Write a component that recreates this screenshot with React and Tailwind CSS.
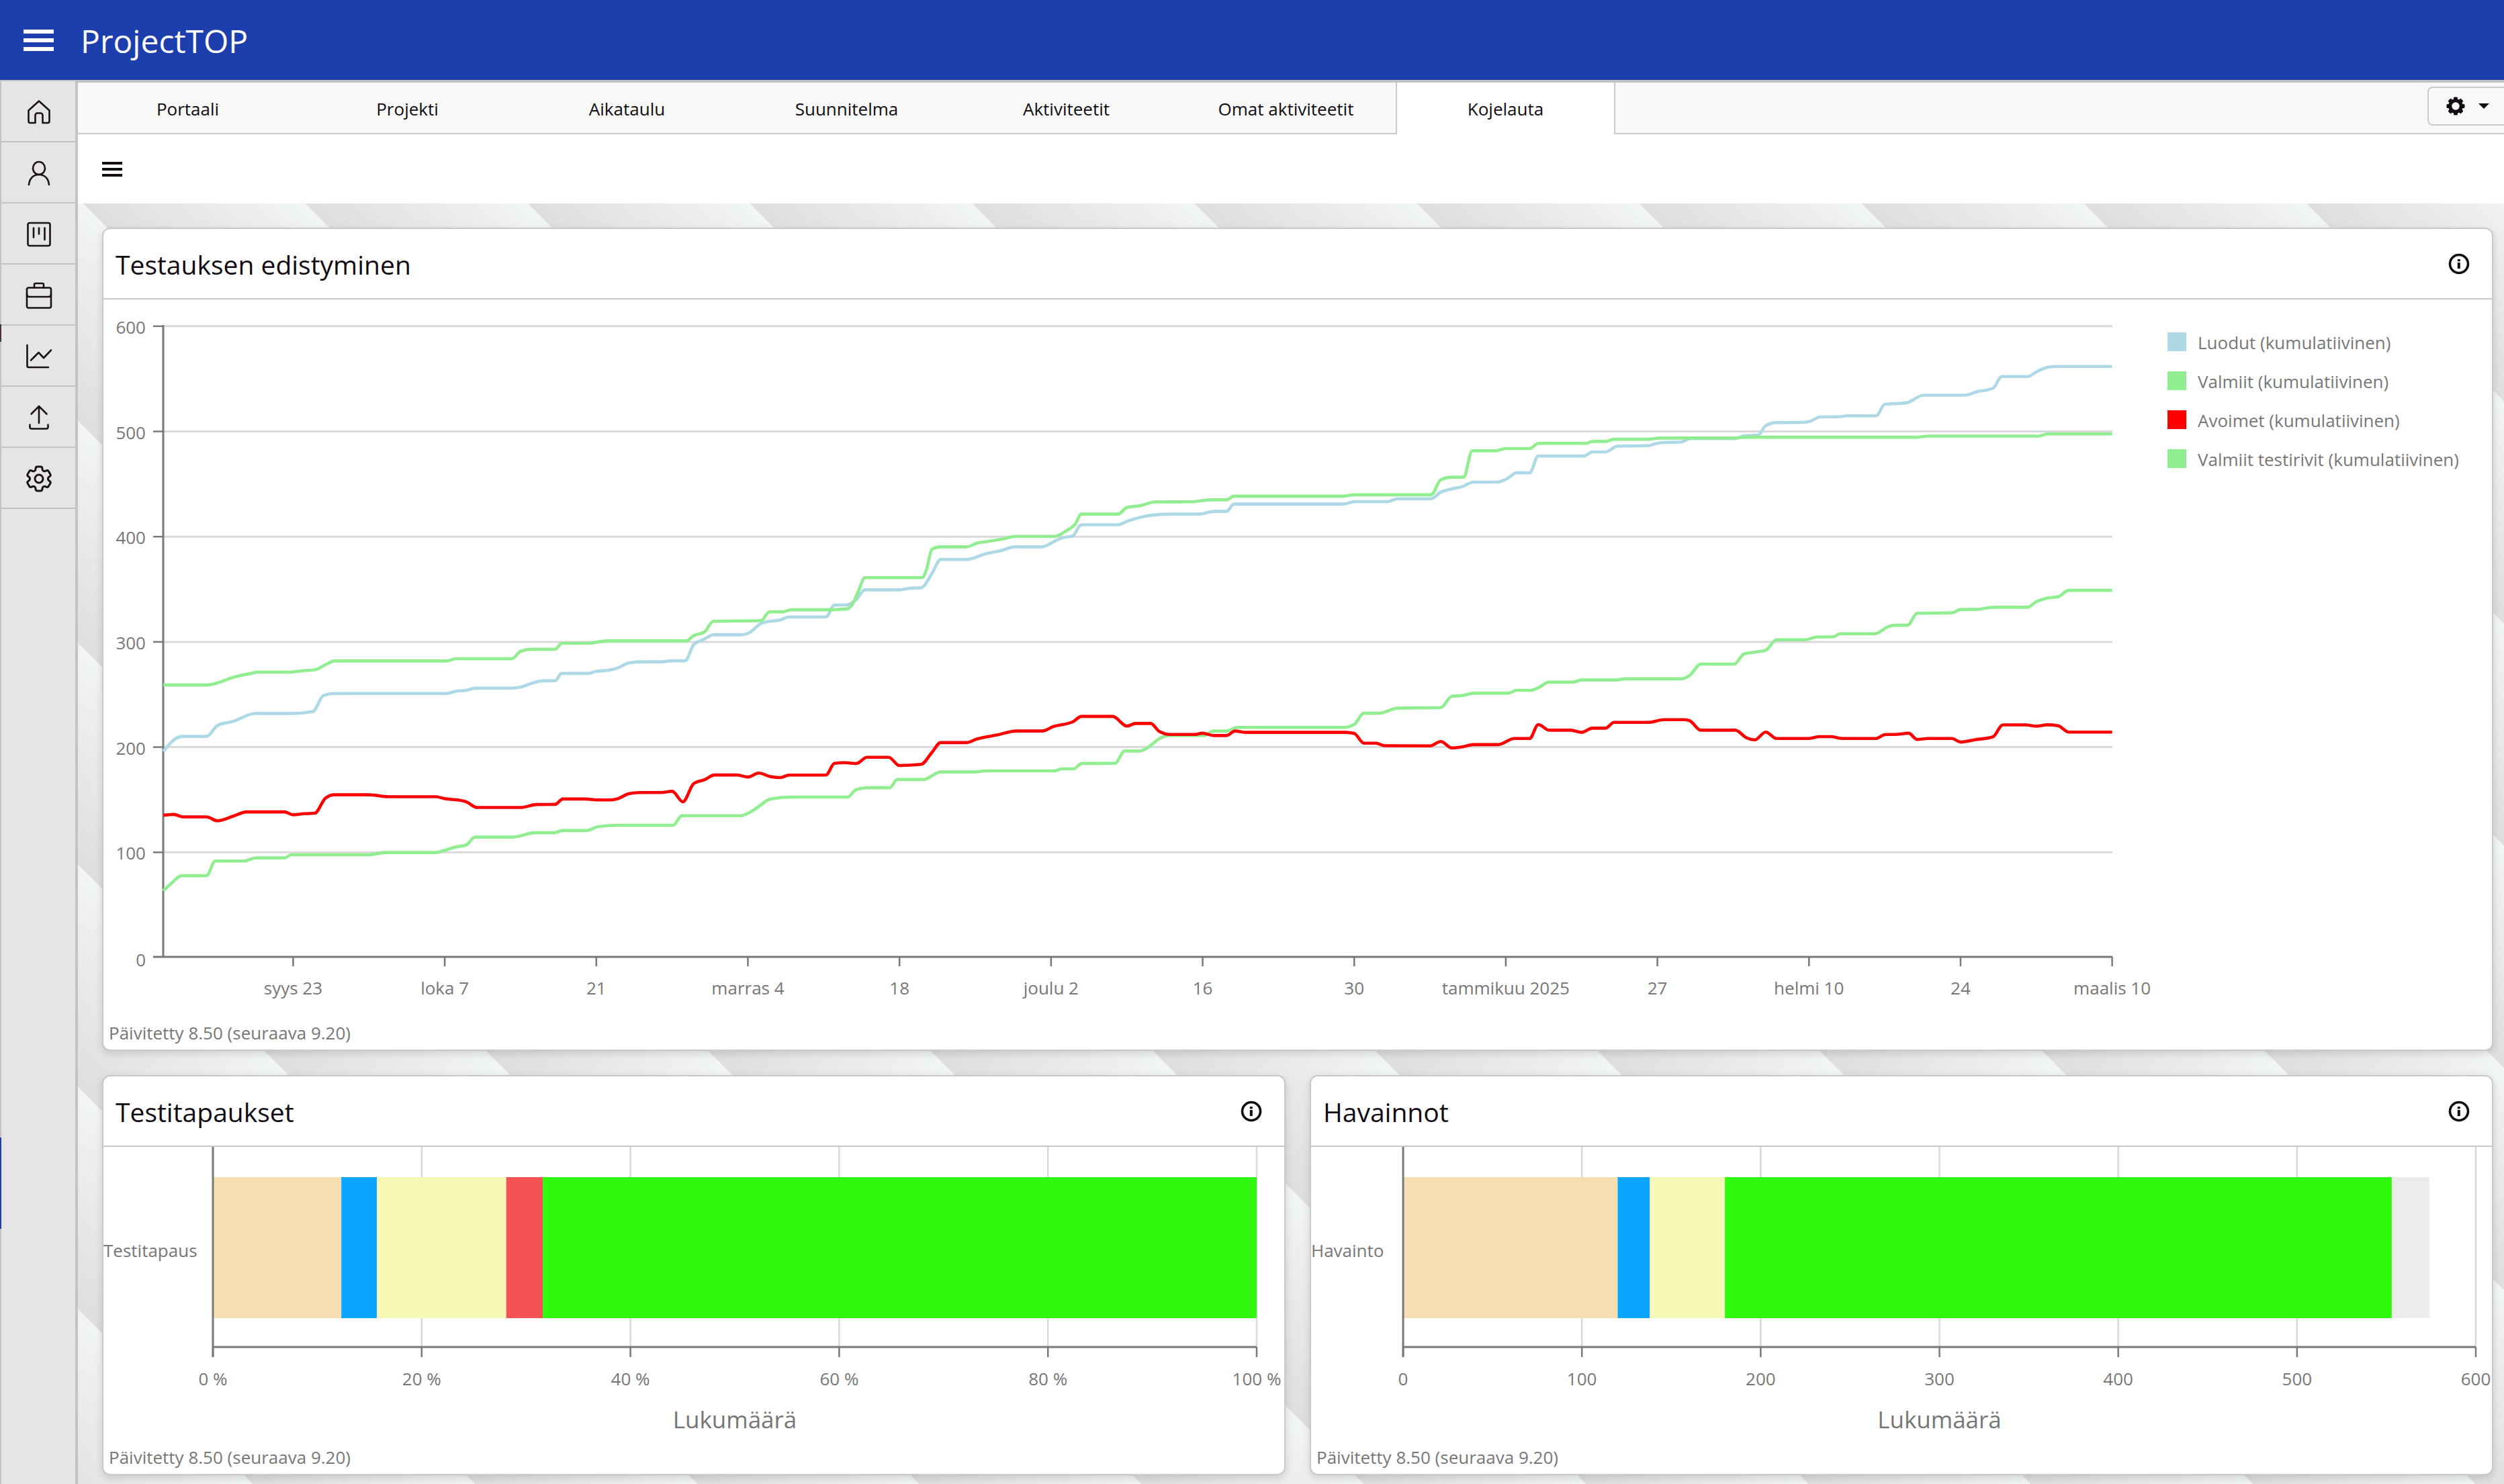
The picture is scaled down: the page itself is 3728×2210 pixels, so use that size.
import React from "react";
import { HiOutlineCog6Tooth } from "react-icons/hi2";

const tabs = [
  "Portaali",
  "Projekti",
  "Aikataulu",
  "Suunnitelma",
  "Aktiviteetit",
  "Omat aktiviteetit",
  "Kojelauta",
];

// Each point is [day, value]
const valmiit = [
  [0, 259], [4, 259], [5, 261], [6.5, 266.4], [8, 269.8], [8.8, 271.2], [11.5, 271.2],
  [13, 272.7], [14, 273.5], [15, 278.4], [15.8, 281.8], [26.2, 281.8], [27, 284], [32.2, 284],
  [33, 291], [34, 293], [36.2, 293], [36.8, 298.7], [39.2, 298.7], [41, 301], [48.3, 301],
  [49, 306], [50, 309.5], [50.8, 319.6], [55.2, 320.2], [56, 328.6], [57.2, 328.6], [58, 330.5],
  [61, 330.5], [63.1, 331.3], [63.6, 335], [64.2, 348], [64.8, 361], [70.1, 361], [70.5, 369],
  [71, 388], [71.8, 390.3], [74.2, 390.3], [75.2, 394], [76, 395.2], [77.5, 397.7], [78.8, 400.3],
  [82.3, 400.3], [83.5, 406.2], [84.2, 411.5], [84.8, 421.4], [88.2, 421.4], [89, 427.7],
  [90.2, 429.4], [91.6, 433], [95, 433.2], [96.8, 435], [98.2, 435], [98.9, 438.5],
  [109, 438.5], [110, 439.8], [117.1, 439.8], [118, 454.1], [119, 456.5], [120.1, 456.5],
  [120.9, 481.6], [123, 481.6], [124, 483.7], [126.2, 483.7], [127, 488.7], [131.4, 488.7],
  [132, 490.5], [133.2, 490.5], [134, 492.6], [137.2, 492.6], [138.2, 493.7], [145, 493.7],
  [146, 494.5], [162, 494.5], [163, 495.5], [173.2, 495.5], [174, 497.6], [180, 497.6],
];

const luodut = [
  [0, 196], [1, 207], [1.8, 210.2], [4, 210.2], [5, 220.4], [6.5, 224.6], [8.5, 232], [12, 232],
  [13.8, 233.7], [14.8, 249], [15.8, 251], [26.2, 251], [27, 253], [28, 254], [28.8, 256],
  [32, 256], [33, 257], [34.3, 261.5], [35, 263], [36.2, 263], [36.8, 270], [39.2, 270],
  [40, 272], [41.2, 273.2], [42, 275.3], [43, 280], [44, 281], [46, 281], [47, 282],
  [48.2, 282], [49, 297.4], [50, 302.7], [50.8, 306.7], [53.3, 306.7], [54, 308], [55.2, 317.4],
  [56, 319.5], [57, 320.8], [57.8, 323.7], [61.2, 323.7], [62, 335], [63, 335], [64, 340],
  [64.8, 349.5], [68, 349.5], [69, 351], [70, 351.4], [71, 365], [71.8, 378.3], [74.2, 378.3],
  [76, 383.8], [77.3, 386.5], [78.7, 390.3], [81.2, 390.3], [82.2, 395], [83, 398.8],
  [84, 400.7], [84.8, 411.3], [88.2, 411.3], [89, 414.6], [91, 420], [93, 421.4], [95.7, 421.4],
  [97, 424], [98.2, 424], [98.9, 431], [109, 431], [110, 433.3], [113.1, 433.3], [114, 436],
  [117.1, 436], [118, 442.3], [119, 445.4], [120, 447.6], [121, 451.8], [123.2, 451.8],
  [124.1, 455], [125, 460.7], [126.2, 460.7], [127, 476.6], [131.2, 476.6], [132, 480.5],
  [133.2, 480.5], [134.3, 486], [137.2, 486.6], [138.2, 489.2], [140.2, 490], [141, 493.2],
  [145.2, 493.2], [146, 495.8], [147.3, 496.4], [148, 505.5], [149, 508.4], [151.5, 508.6],
  [152.2, 510], [153, 513.7], [154.8, 514], [155.5, 514.8], [158.2, 514.8], [159, 525.8],
  [161, 527.2], [162.6, 534.5], [166.4, 534.5], [167.5, 537.7], [169, 541], [169.8, 552.2],
  [172.2, 552.2], [173.2, 557.7], [174.3, 561.4], [175, 561.7], [180, 561.7],
];

const avoimet = [
  [0, 135.2], [1, 136], [1.8, 133.7], [4, 133.7], [5, 130], [6.5, 134.5], [7.7, 138.4],
  [11.2, 138.4], [12, 135.7], [13, 136.7], [14, 137.2], [15, 151.7], [15.8, 154.7], [19, 154.7],
  [20.8, 152.8], [25.2, 152.8], [26, 151], [27.3, 149.6], [28, 148], [29, 142.6], [33, 142.6],
  [34.5, 145.4], [36.2, 145.6], [36.9, 150.7], [39, 150.7], [40, 149.8], [41.3, 149.8],
  [42, 151], [43, 155.7], [44, 156.8], [46, 156.8], [47, 158], [48, 148], [49, 165.4],
  [50, 169], [50.9, 173.5], [53, 173.5], [54, 171.6], [55, 175.3], [56, 172.2], [57, 171],
  [57.8, 173.4], [61.2, 173.4], [62, 184.6], [63, 185.2], [64, 184.4], [65, 190.3],
  [67, 190.3], [68, 182.5], [70, 183.6], [71, 195], [71.8, 204.3], [74.2, 204.3],
  [75.2, 207.9], [77, 211.5], [78.8, 215.3], [81.2, 215.3], [82.2, 219.5], [84, 224],
  [84.8, 229.2], [87.7, 229.2], [89, 220], [89.8, 222.5], [91.2, 222.5], [92, 214.9],
  [93, 212], [95.3, 212], [96, 213.2], [97, 211], [98.2, 211], [99, 215.3], [100, 214],
  [109.2, 214], [110, 213], [110.9, 203.7], [112, 203.7], [112.8, 201.3], [117, 201.2],
  [118, 205.3], [119, 199.2], [120, 200.3], [121, 202.4], [123.3, 202.4], [124.8, 208.2],
  [126.2, 208.2], [127, 221.4], [128, 216.1], [130, 216.1], [131, 214], [132, 218],
  [133.2, 218], [134, 223.5], [137.2, 223.5], [138.6, 226.1], [140.5, 226.1], [141, 225],
  [142, 216.1], [145.2, 216.1], [146.2, 209], [147, 206.9], [148, 214.3], [149, 208.2],
  [152, 208.2], [153, 210], [154, 210], [155, 208.2], [158.2, 208.2], [159, 211.9],
  [160.2, 212.2], [161.2, 213.2], [162, 207.2], [163, 208.2], [165.2, 208.2], [166, 204.8],
  [167.3, 206.9], [169, 209.8], [169.9, 221.1], [172, 221.1], [173, 219.8], [174, 221.2],
  [175, 220.3], [176, 214.3], [180, 214.3],
];

const testirivit = [
  [0, 63.4], [0.8, 71], [1.7, 77.8], [4, 77.8], [4.8, 91.7], [7.5, 91.7], [8.5, 94.7],
  [11.2, 94.7], [11.8, 97.6], [19, 97.6], [20.5, 99.8], [25.2, 99.8], [26, 102], [27, 105],
  [28, 107.2], [28.8, 114.5], [32.3, 114.5], [34.3, 118.6], [36.1, 118.6], [36.9, 120.7],
  [39.1, 120.7], [40.2, 124.4], [42, 125.7], [47.1, 125.7], [47.9, 134.8], [53.3, 134.8],
  [54.5, 140], [55.2, 145.1], [56, 150.4], [58, 152.5], [63.2, 152.5], [64, 159.6],
  [65, 161.4], [67.1, 161.4], [67.8, 169.2], [70.2, 169.2], [71.8, 176.4], [75, 176.4],
  [76, 177.4], [82.3, 177.4], [83, 179.3], [84.1, 179.3], [84.8, 184.4], [87.9, 184.6],
  [88.8, 196.3], [90.2, 196.3], [91, 200], [92, 208], [92.9, 211], [96.1, 211], [97, 215.3],
  [98.2, 215.3], [99.2, 218.7], [109, 218.7], [110, 221.6], [110.9, 232.2], [112.3, 232.2],
  [114, 237], [118, 237.6], [119, 248.3], [120, 249], [121, 251.2], [124.2, 251.2],
  [125, 254], [126.3, 254], [127, 256.4], [128, 261.7], [130.2, 261.7], [131, 263.8],
  [134.2, 263.8], [135, 264.9], [140.2, 264.9], [141, 268.3], [142, 278.9], [145.1, 278.9],
  [146, 288.6], [147, 290.2], [148, 292], [149, 302], [151.6, 302], [152.8, 304.7],
  [154.2, 304.7], [154.9, 307.8], [158.1, 307.8], [159.3, 314.4], [160, 315.8],
  [161.1, 315.8], [162, 327.2], [165.2, 327.6], [166, 330.8], [167.4, 330.8], [169, 332.9],
  [172.2, 332.9], [173, 338.2], [174, 341.6], [175, 342.8], [176, 349], [180, 349],
];

const series = [
  { name: "Luodut (kumulatiivinen)", color: "#add8e6", points: luodut },
  { name: "Valmiit (kumulatiivinen)", color: "#90ee90", points: valmiit },
  { name: "Avoimet (kumulatiivinen)", color: "#ff0000", points: avoimet },
  { name: "Valmiit testirivit (kumulatiivinen)", color: "#90ee90", points: testirivit },
];

const dateTicks = [
  "syys 23", "loka 7", "21", "marras 4", "18", "joulu 2", "16",
  "30", "tammikuu 2025", "27", "helmi 10", "24", "maalis 10",
];

const testCases = {
  title: "Testitapaukset",
  category: "Testitapaus",
  left: 163,
  right: 1717,
  max: 100,
  ticks: [0, 20, 40, 60, 80, 100],
  unit: " %",
  segments: [
    { from: 0, to: 12.3, color: "#f7deb1" },
    { from: 12.3, to: 15.7, color: "#0ba5ff" },
    { from: 15.7, to: 28.1, color: "#f6f8b6" },
    { from: 28.1, to: 31.6, color: "#f55353" },
    { from: 31.6, to: 100, color: "#30f90f" },
  ],
};

const findings = {
  title: "Havainnot",
  category: "Havainto",
  left: 137,
  right: 1734,
  max: 600,
  ticks: [0, 100, 200, 300, 400, 500, 600],
  unit: "",
  segments: [
    { from: 0, to: 120, color: "#f7deb1" },
    { from: 120, to: 138, color: "#0ba5ff" },
    { from: 138, to: 180, color: "#f6f8b6" },
    { from: 180, to: 553, color: "#30f90f" },
    { from: 553, to: 574, color: "#ececec" },
  ],
};

const dayX = (d) => 89 + d * 16.12;
const valueY = (v) => 980 - v * 1.567;

// Monotone cubic path, so flat stretches stay flat
const linePath = (points) => {
  const p = points.map(([d, v]) => [dayX(d), valueY(v)]);
  const slope = (i) => (p[i + 1][1] - p[i][1]) / (p[i + 1][0] - p[i][0]);
  const tangents = p.map((_, i) => {
    if (i === 0) return slope(0);
    if (i === p.length - 1) return slope(i - 1);
    const a = slope(i - 1);
    const b = slope(i);
    if (a * b <= 0) return 0;
    return Math.sign(a) * Math.min(Math.abs(a), Math.abs(b), Math.abs(a + b) / 4) * 2;
  });
  let path = `M${p[0][0]},${p[0][1]}`;
  for (let i = 0; i < p.length - 1; i++) {
    const h = (p[i + 1][0] - p[i][0]) / 3;
    path += `C${p[i][0] + h},${p[i][1] + h * tangents[i]} ${p[i + 1][0] - h},${
      p[i + 1][1] - h * tangents[i + 1]
    } ${p[i + 1][0]},${p[i + 1][1]}`;
  }
  return path;
};

const LineIcon = ({ children }) => (
  <svg
    viewBox="0 0 40 40"
    className="size-10"
    fill="none"
    stroke="#1a1015"
    strokeWidth="2.6"
    strokeLinecap="round"
    strokeLinejoin="round"
    aria-hidden="true"
  >
    {children}
  </svg>
);

const sideItems = [
  {
    label: "Koti",
    icon: (
      <LineIcon>
        <path d="M20 3.5 4.5 17.500V33.500a2.500 2.500 0 0 0 2.500 2.500h7.500V24.500a3 3 0 0 1 3-3h5a3 3 0 0 1 3 3V36H33a2.500 2.500 0 0 0 2.500-2.500V17.500z" />
      </LineIcon>
    ),
  },
  {
    label: "Käyttäjä",
    icon: (
      <LineIcon>
        <ellipse cx="20" cy="12.5" rx="9" ry="9.5" />
        <path d="M5 37c.8-9 6.500-15 15-15s14.200 6 15 15" />
      </LineIcon>
    ),
  },
  {
    label: "Taulu",
    icon: (
      <LineIcon>
        <rect x="3.5" y="3" width="33" height="34" rx="2.5" />
        <path d="M12 10.500v14M20 10.500v9M28.500 10.500v17.500" />
      </LineIcon>
    ),
  },
  {
    label: "Salkku",
    icon: (
      <LineIcon>
        <rect x="2" y="8.5" width="36" height="30" rx="2.5" />
        <path d="M13 8.500V4a2 2 0 0 1 2-2h10a2 2 0 0 1 2 2v4.500M2 18c0 3 1.500 4 4 4h28c2.500 0 4-1 4-4" />
      </LineIcon>
    ),
  },
  {
    label: "Raportit",
    icon: (
      <LineIcon>
        <path d="M2.500 3v31a2 2 0 0 0 2 2H34M8 25.500 19.500 14l7.500 8L38 10.500" />
      </LineIcon>
    ),
  },
  {
    label: "Lähetä",
    icon: (
      <LineIcon>
        <path d="M20 28V3M8.500 14.500 20 3l11.500 11.500M6.500 30.500V34a2.500 2.500 0 0 0 2.500 2.500h22a2.500 2.500 0 0 0 2.500-2.500v-3.500" />
      </LineIcon>
    ),
  },
  {
    label: "Asetukset",
    icon: <HiOutlineCog6Tooth className="size-12 text-[#1a1015]" aria-hidden="true" />,
  },
];

const InfoIcon = () => (
  <svg viewBox="0 0 32 32" className="size-8" aria-hidden="true">
    <circle cx="16" cy="16" r="13.5" fill="none" stroke="#120b14" strokeWidth="3.6" />
    <path d="M13.800 14h4v9h-4zM13.800 9h4v3.200h-4z" fill="#120b14" />
  </svg>
);

const GearIcon = () => (
  <svg viewBox="0 0 28 28" className="size-7" aria-hidden="true">
    <circle cx="14" cy="14" r="8.3" fill="none" stroke="#120b14" strokeWidth="5" />
    {[0, 45, 90, 135, 180, 225, 270, 315].map((a) => (
      <rect
        key={a}
        x="11"
        y="0.5"
        width="6"
        height="5"
        rx="1.5"
        fill="#120b14"
        transform={`rotate(${a} 14 14)`}
      />
    ))}
  </svg>
);

const Card = ({ title, children }) => (
  <section className="flex flex-col rounded-xl border-2 border-[#c9c9c9] bg-white shadow-[0_4px_12px_rgba(0,0,0,0.14)]">
    <div className="flex h-[105px] items-center justify-between border-b-2 border-[#c9c9c9] pr-[33px] pl-[18px]">
      <h2 className="pt-[2px] text-[39px] leading-[52px] text-[#120b14]">{title}</h2>
      <button type="button" aria-label={`Tietoja: ${title}`}>
        <InfoIcon />
      </button>
    </div>
    {children}
    <p className="h-[47px] pl-2 text-[26px] leading-[44px] text-[#777]">
      Päivitetty 8.50 (seuraava 9.20)
    </p>
  </section>
);

const ProgressChart = () => (
  <div className="flex items-start">
    <svg
      viewBox="0 0 3050 1070"
      className="min-w-0 flex-1 overflow-visible"
      role="img"
      aria-label="Testauksen edistyminen"
    >
      {[100, 200, 300, 400, 500, 600].map((v) => (
        <g key={v}>
          <line x1="89" x2="2991" y1={valueY(v)} y2={valueY(v)} stroke="#d9d9d9" strokeWidth="3" />
          <line x1="74" x2="89" y1={valueY(v)} y2={valueY(v)} stroke="#77787a" strokeWidth="2.5" />
          <text x="63" y={valueY(v) + 11} textAnchor="end" className="fill-[#777] text-[26px]">
            {v}
          </text>
        </g>
      ))}
      <text x="63" y="993" textAnchor="end" className="fill-[#777] text-[26px]">
        0
      </text>
      <path d="M89 38V980M74 979H2991" stroke="#77787a" strokeWidth="3" fill="none" />
      {dateTicks.map((label, i) => (
        <g key={i}>
          <line
            x1={dayX(12 + i * 14)}
            x2={dayX(12 + i * 14)}
            y1="979"
            y2="993"
            stroke="#77787a"
            strokeWidth="2.5"
          />
          <text
            x={dayX(12 + i * 14)}
            y="1035"
            textAnchor="middle"
            className="fill-[#777] text-[26px]"
          >
            {label}
          </text>
        </g>
      ))}
      {/* open items are drawn last, on top */}
      {[0, 3, 1, 2].map((i) => (
        <path
          key={i}
          d={linePath(series[i].points)}
          stroke={series[i].color}
          strokeWidth="4.6"
          fill="none"
        />
      ))}
    </svg>
    <ul className="flex w-[506px] shrink-0 flex-col gap-[30px] pt-[49px] pl-[23px]">
      {series.map((s) => (
        <li key={s.name} className="flex h-7 items-center gap-[17px]">
          <span className="size-7 shrink-0" style={{ backgroundColor: s.color }} />
          <span className="pt-[2px] text-[26px] leading-7 whitespace-nowrap text-[#777]">
            {s.name}
          </span>
        </li>
      ))}
    </ul>
  </div>
);

const BarChart = ({ chart }) => {
  const x = (v) => chart.left + (v / chart.max) * (chart.right - chart.left);
  return (
    <svg viewBox="0 0 1758 440" className="w-full overflow-visible" role="img" aria-label={chart.title}>
      {chart.ticks.slice(1).map((t) => (
        <line key={t} x1={x(t)} x2={x(t)} y1="0" y2="298" stroke="#d9d9d9" strokeWidth="2.5" />
      ))}
      {chart.segments.map((s) => (
        <rect key={s.from} x={x(s.from)} y="45" width={x(s.to) - x(s.from)} height="210" fill={s.color} />
      ))}
      <path
        d={`M${chart.left} 0V313M${chart.left} 298H${chart.right}`}
        stroke="#77787a"
        strokeWidth="3"
        fill="none"
      />
      {chart.ticks.map((t) => (
        <g key={t}>
          <line x1={x(t)} x2={x(t)} y1="298" y2="313" stroke="#77787a" strokeWidth="2.5" />
          <text x={x(t)} y="355" textAnchor="middle" className="fill-[#777] text-[26px]">
            {t}
            {chart.unit}
          </text>
        </g>
      ))}
      <text x="0" y="164" className="fill-[#777] text-[26px]">
        {chart.category}
      </text>
      <text
        x={(chart.left + chart.right) / 2}
        y="419"
        textAnchor="middle"
        className="fill-[#777] text-[35px]"
      >
        Lukumäärä
      </text>
    </svg>
  );
};

const App = () => {
  return (
    <div className="flex min-h-screen flex-col bg-white font-['Open_Sans','Noto_Sans',sans-serif]">
      <header className="flex h-[119px] items-center gap-10 bg-[#1d3fae] pl-[35px]">
        <button type="button" aria-label="Päävalikko" className="flex w-[45px] flex-col gap-[7px]">
          <span className="h-[6px] bg-white" />
          <span className="h-[6px] bg-white" />
          <span className="h-[6px] bg-white" />
        </button>
        <h1 className="pt-[3px] text-[48px] leading-[64px] text-white">ProjectTOP</h1>
      </header>

      <div className="flex flex-1">
        <nav className="relative flex w-[116px] shrink-0 flex-col border-t-2 border-r-4 border-l-2 border-[#c3c3c3] bg-[#e5e5e5]">
          {sideItems.map((item) => (
            <a
              key={item.label}
              href="#"
              aria-label={item.label}
              className="flex h-[91px] items-center justify-center border-b-2 border-[#c3c3c3] pt-[3px] pl-[2px]"
            >
              {item.icon}
            </a>
          ))}
          {/* edge markers */}
          <span className="absolute top-[362px] -left-[2px] h-[26px] w-[2px] bg-[#4a3438]" />
          <span className="absolute top-[1573px] -left-[2px] h-[136px] w-[2px] bg-[#1d3fae]" />
        </nav>

        <main className="flex min-w-0 flex-1 flex-col">
          <div className="flex h-[81px] justify-between border-t-4 border-b-2 border-t-[#c3c3c3] border-b-[#c9c9c9] bg-[#f8f8f7]">
            <nav className="flex">
              {tabs.map((tab) => (
                <a
                  key={tab}
                  href="#"
                  className={
                    tab === "Kojelauta"
                      ? "-mb-[2px] flex w-[327px] items-center justify-center border-x-2 border-[#c9c9c9] bg-white pt-[3px] pb-[2px] text-[26px] leading-9 text-[#120b14]"
                      : "flex w-[327px] items-center justify-center pt-[3px] text-[26px] leading-9 text-[#120b14]"
                  }
                >
                  {tab}
                </a>
              ))}
            </nav>
            <button
              type="button"
              aria-label="Asetusvalikko"
              className="mt-[6px] flex h-[58px] w-[114px] items-center gap-5 rounded-l-lg border-2 border-r-0 border-[#c9c9c9] pl-[26px]"
            >
              <GearIcon />
              <svg viewBox="0 0 16 8" className="h-2 w-4" aria-hidden="true">
                <path d="M0 0h16L8 8z" fill="#120b14" />
              </svg>
            </button>
          </div>

          <div className="flex h-[103px] items-center px-9">
            <button type="button" aria-label="Valikko" className="flex w-[30px] flex-col gap-[5px]">
              <span className="h-[4px] bg-[#120b14]" />
              <span className="h-[4px] bg-[#120b14]" />
              <span className="h-[4px] bg-[#120b14]" />
            </button>
          </div>

          <div className="flex flex-1 flex-col gap-9 bg-[repeating-linear-gradient(45deg,#dedede_-50px,#f2f5f5_184px)] pt-9 pr-4 pb-3 pl-9">
            <Card title="Testauksen edistyminen">
              <ProgressChart />
            </Card>
            <div className="grid grid-cols-2 gap-9">
              <Card title={testCases.title}>
                <BarChart chart={testCases} />
              </Card>
              <Card title={findings.title}>
                <BarChart chart={findings} />
              </Card>
            </div>
          </div>
        </main>
      </div>
    </div>
  );
};

export default App;
